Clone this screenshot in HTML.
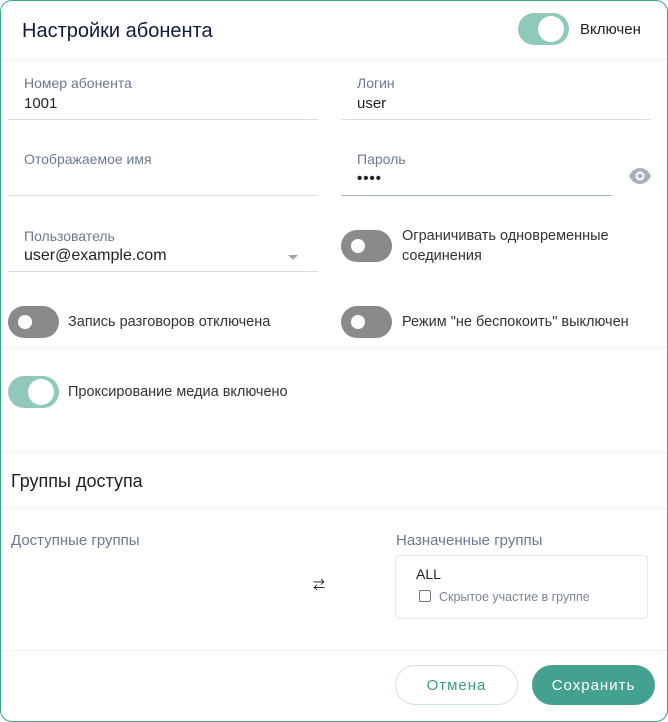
<!DOCTYPE html><html><head><meta charset="utf-8"><style>
body{margin:0;width:668px;height:722px;background:#fff;font-family:"Liberation Sans","Noto Sans CJK SC",sans-serif;overflow:hidden}
.card{position:absolute;left:0;top:0;width:666px;height:720px;border:1px solid #3aa58a;border-radius:12px;background:#fff}
.in{position:absolute;left:-1px;top:-1px;width:668px;height:722px}
.a{position:absolute;white-space:nowrap}
.lbl{color:#6b7a8f;font-size:14px}
.val{color:#222;font-size:15px}
.line{position:absolute;height:1px;background:#d8dde4}
.hr{position:absolute;left:1px;width:666px;height:1px;background:#f0f2f4}
.tg{position:absolute;width:51px;height:32px;border-radius:16px;background:#8a8a8a}
.tg::after{content:"";position:absolute;top:9px;left:10px;width:14px;height:14px;border-radius:50%;background:#fff}
.tg.on{background:#8fc9bb}
.tg.on::after{left:auto;right:5px;top:3px;width:26px;height:26px}
.txt{color:#333;font-size:14.5px}
</style></head><body><div class="card"><div class="in">
<div class="a" style="left:22px;top:20px;font-size:20px;color:#111a3a">Настройки абонента</div>
<div class="tg on" style="left:518px;top:13px"></div>
<div class="a" style="left:580px;top:21px;font-size:15px;color:#222">Включен</div>
<div class="hr" style="top:59px"></div>

<div class="a lbl" style="left:24px;top:75px">Номер абонента</div>
<div class="a val" style="left:24px;top:95px">1001</div>
<div class="line" style="left:8px;top:119px;width:310px"></div>
<div class="a lbl" style="left:357px;top:75px">Логин</div>
<div class="a val" style="left:357px;top:95px">user</div>
<div class="line" style="left:341px;top:119px;width:310px"></div>

<div class="a lbl" style="left:24px;top:151px">Отображаемое имя</div>
<div class="line" style="left:8px;top:195px;width:310px"></div>
<div class="a lbl" style="left:357px;top:151px">Пароль</div>
<div class="a val" style="left:357px;top:170px;font-weight:bold;letter-spacing:1px">••••</div>
<div class="line" style="left:341px;top:195px;width:271px;background:#a9b3c0"></div>
<svg class="a" style="left:628px;top:166px" width="24" height="20" viewBox="0 0 24 20"><path d="M1 10C4 4 8 2 12 2s8 2 11 8c-3 6-7 8-11 8S4 16 1 10z" fill="#a8b1bd"/><circle cx="12" cy="10" r="4.5" fill="#fff"/><circle cx="12" cy="10" r="2.5" fill="#a8b1bd"/></svg>

<div class="a lbl" style="left:24px;top:228px">Пользователь</div>
<div class="a val" style="left:24px;top:247px;font-size:16px">user@example.com</div>
<div class="a" style="left:288px;top:255px;width:0;height:0;border-left:5px solid transparent;border-right:5px solid transparent;border-top:5px solid #9aa5b2"></div>
<div class="line" style="left:8px;top:271px;width:310px"></div>
<div class="tg" style="left:341px;top:230px"></div>
<div class="a txt" style="left:402px;top:228px">Ограничивать одновременные</div>
<div class="a txt" style="left:402px;top:248px">соединения</div>

<div class="tg" style="left:8px;top:306px"></div>
<div class="a txt" style="left:68px;top:314px">Запись разговоров отключена</div>
<div class="tg" style="left:341px;top:306px"></div>
<div class="a txt" style="left:402px;top:314px">Режим "не беспокоить" выключен</div>
<div class="hr" style="top:347px"></div>
<div class="tg on" style="left:8px;top:376px"></div>
<div class="a txt" style="left:68px;top:384px">Проксирование медиа включено</div>

<div class="hr" style="top:452px"></div>
<div class="a" style="left:11px;top:471px;font-size:18px;color:#222">Группы доступа</div>
<div class="hr" style="top:508px"></div>
<div class="a" style="left:11px;top:532px;font-size:15px;color:#6b7a8f">Доступные группы</div>
<div class="a" style="left:396px;top:532px;font-size:15px;color:#6b7a8f">Назначенные группы</div>
<div class="a" style="left:313px;top:576px;font-size:12px;color:#111">⇄</div>
<div class="a" style="left:395px;top:555px;width:251px;height:62px;border:1px solid #e6e9ed;border-radius:4px"></div>
<div class="a" style="left:416px;top:566px;font-size:14px;color:#222">ALL</div>
<div class="a" style="left:419px;top:590px;width:10px;height:10px;border:1.5px solid #777;border-radius:2px"></div>
<div class="a" style="left:439px;top:590px;font-size:12.5px;color:#7a8594">Скрытое участие в группе</div>
<div class="hr" style="top:650px"></div>
<div class="a" style="left:395px;top:665px;width:121px;height:38px;border:1px solid #cfe4de;border-radius:20px;color:#3a9a84;font-size:15px;letter-spacing:1px;text-align:center;line-height:40px">Отмена</div>
<div class="a" style="left:532px;top:665px;width:123px;height:40px;background:#45a18f;border-radius:20px;color:#fff;font-size:15px;letter-spacing:1px;text-align:center;line-height:42px">Сохранить</div>
</div></div></body></html>
